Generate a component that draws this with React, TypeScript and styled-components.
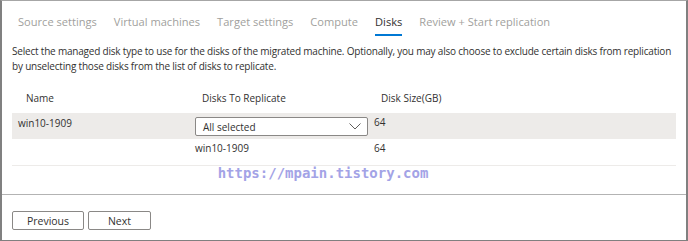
import React from "react";
import styled, { createGlobalStyle } from "styled-components";

const Global = createGlobalStyle`
  html, body { margin: 0; padding: 0; background: #fff; }
  * { box-sizing: border-box; }
`;

const Frame = styled.div`
  width: 688px;
  height: 241px;
  border-top: 1px solid #a6a6a6;
  border-left: 2px solid #808080;
  border-right: 2px solid #808080;
  border-bottom: 1px solid #808080;
  display: flex;
  flex-direction: column;
  font-family: "Segoe UI", "Open Sans", "Noto Sans", sans-serif;
  color: #323130;
  overflow: hidden;
`;

const Content = styled.div`
  padding: 0 10px;
  height: 193px;
  display: flex;
  flex-direction: column;
`;

const Tabs = styled.div`
  display: flex;
  gap: 17px;
  padding-left: 6px;
  height: 35px;
  padding-top: 11px;
`;

const Tab = styled.div<{ $active?: boolean }>`
  font-size: 11.1px;
  line-height: 20px;
  height: 24px;
  color: ${(p) => (p.$active ? "#323130" : "#a19f9d")};
  border-bottom: 2px solid ${(p) => (p.$active ? "#0078d4" : "transparent")};
  white-space: nowrap;
`;

const Desc = styled.p`
  margin: 8px 0 0;
  font-size: 10px;
  letter-spacing: -0.2px;
  line-height: 15px;
  color: #323130;
`;

const Table = styled.div`
  margin-top: 12px;
  display: flex;
  flex-direction: column;
  width: 664px;
`;

const Row = styled.div<{ $shade?: boolean; $line?: boolean }>`
  display: grid;
  grid-template-columns: 183px 179px 1fr;
  height: ${(p) => (p.$line ? 27 : 26)}px;
  background: ${(p) => (p.$shade ? "#edebe9" : "transparent")};
  border-bottom: ${(p) => (p.$line ? "1px solid #edebe9" : "none")};
  align-items: start;
  font-size: 10px;
  color: #323130;
`;

const HeadRow = styled(Row)`
  height: 27px;
`;

const Cell = styled.div<{ $pl?: number; $pt?: number }>`
  padding-left: ${(p) => p.$pl ?? 0}px;
  padding-top: ${(p) => p.$pt ?? 0}px;
  line-height: 14px;
  white-space: nowrap;
`;

const Select = styled.div`
  margin-top: 4px;
  width: 173px;
  height: 19px;
  border: 1px solid #8a8886;
  border-radius: 2px;
  background: #fff;
  display: flex;
  align-items: center;
  justify-content: space-between;
  padding: 0 6px 0 7px;
  font-size: 10px;
  color: #323130;
`;

const Watermark = styled.div`
  text-align: center;
  font-family: "DejaVu Sans Mono", "Liberation Mono", monospace;
  font-weight: bold;
  font-size: 14px;
  line-height: 15px;
  color: #a3a3e6;
  width: 622px;
`;

const Footer = styled.div`
  border-top: 1px solid #b3b3b3;
  flex: 1;
  display: flex;
  gap: 4px;
  padding: 16px 10px 0;
`;

const Button = styled.button<{ $w: number }>`
  width: ${(p) => p.$w}px;
  height: 19px;
  border: 1px solid #8a8886;
  border-radius: 2px;
  background: #fff;
  font-family: "Segoe UI", "Open Sans", "Noto Sans", sans-serif;
  font-size: 10.5px;
  color: #323130;
  padding: 0;
  line-height: 16px;
`;

const Chevron = () => (
  <svg width="12" height="7" viewBox="0 0 12 7">
    <path d="M0.5 0.5 L6 6 L11.5 0.5" fill="none" stroke="#605e5c" strokeWidth="1" />
  </svg>
);

export default function App() {
  return (
    <>
      <Global />
      <Frame>
        <Content>
          <Tabs>
            <Tab>Source settings</Tab>
            <Tab>Virtual machines</Tab>
            <Tab>Target settings</Tab>
            <Tab>Compute</Tab>
            <Tab $active>Disks</Tab>
            <Tab>Review + Start replication</Tab>
          </Tabs>
          <Desc>
            Select the managed disk type to use for the disks of the migrated machine. Optionally, you may also choose to exclude certain disks from replication by unselecting those disks from the list of disks to replicate.
          </Desc>
          <Table>
            <HeadRow>
              <Cell $pl={14} $pt={5}>Name</Cell>
              <Cell $pl={7} $pt={5}>Disks To Replicate</Cell>
              <Cell $pl={7} $pt={5}>Disk Size(GB)</Cell>
            </HeadRow>
            <Row $shade>
              <Cell $pl={6} $pt={3}>win10-1909</Cell>
              <Cell>
                <Select>
                  <span>All selected</span>
                  <Chevron />
                </Select>
              </Cell>
              <Cell $pt={2}>64</Cell>
            </Row>
            <Row $line>
              <Cell />
              <Cell $pt={2}>win10-1909</Cell>
              <Cell $pt={2}>64</Cell>
            </Row>
          </Table>
          <Watermark>https://mpain.tistory.com</Watermark>
        </Content>
        <Footer>
          <Button $w={72}>Previous</Button>
          <Button $w={63}>Next</Button>
        </Footer>
      </Frame>
    </>
  );
}
